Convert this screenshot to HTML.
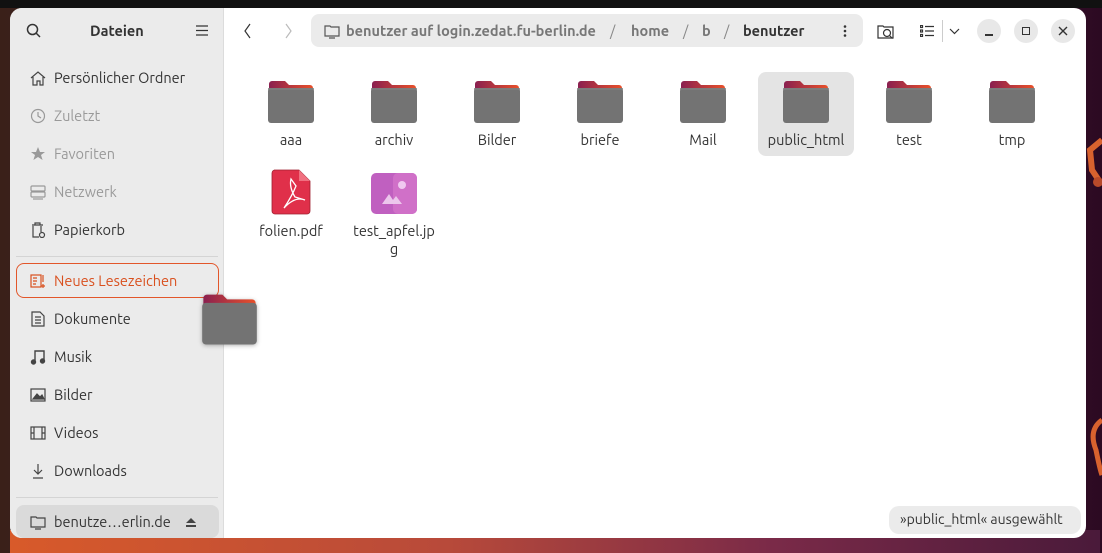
<!DOCTYPE html>
<html><head><meta charset="utf-8"><style>
*{margin:0;padding:0;box-sizing:border-box}
body{width:1102px;height:553px;overflow:hidden;position:relative;font-family:"Ubuntu","Liberation Sans",sans-serif;background:linear-gradient(90deg,#3a2019 0%,#4a1e2e 30%,#5a2040 70%,#2c0a22 100%)}
.top{position:absolute;left:0;top:0;width:1102px;height:8px;background:#111}
.bottomstrip{position:absolute;left:10px;top:530px;width:1090px;height:23px;background:linear-gradient(90deg,#d85a2a,#b84a3a 40%,#7a2a48 70%,#4a1a3a)}
.win{position:absolute;left:10px;top:8px;width:1076px;height:530px;background:#fff;border-radius:12px;overflow:hidden}
.side{position:absolute;left:0;top:0;width:214px;height:530px;background:#ebebeb;border-right:1px solid #dcdcdc}
.t{position:absolute;font-size:14.5px;color:#333;white-space:nowrap}
.it{position:absolute;left:0;width:214px;height:34px;font-size:14.5px;color:#333}
.it span{position:absolute;left:44px;top:8px}
.it svg{position:absolute;left:20px;top:9px}
.dim{color:#999}
.sep{position:absolute;left:6px;width:202px;height:1px;background:#d4d4d4}
.fold{position:absolute;width:48px;height:44px}
.lbl{position:absolute;width:100px;text-align:center;font-size:14.5px;color:#333}
.btn{position:absolute;width:24px;height:24px;border-radius:12px;background:#e8e8e8}
</style></head><body>
<div class="top"></div>
<svg style="position:absolute;left:1086px;top:130px" width="16" height="400"><path d="M16 10 L4 20 L6 40 L16 55" stroke="#d8622e" stroke-width="6" fill="none"/><circle cx="12" cy="52" r="5" fill="#b84a2a"/><path d="M16 290 Q2 300 10 320 Q14 340 16 345" stroke="#d8622e" stroke-width="5" fill="none"/></svg>
<div class="bottomstrip"></div>
<div class="win">
 <div class="side">
  <svg style="position:absolute;left:16px;top:15px" width="16" height="16" fill="none" stroke="#333" stroke-width="1.5"><circle cx="6.5" cy="6.5" r="5"/><path d="M10 10l4 4"/></svg>
  <div class="t" style="left:80px;top:14px;font-weight:bold;color:#333">Dateien</div>
  <svg style="position:absolute;left:186px;top:17px" width="12" height="11" stroke="#333" stroke-width="1.3"><path d="M0 1h12M0 5.5h12M0 10h12"/></svg>
  <div class="it" style="top:53px"><svg width="16" height="16" fill="none" stroke="#444" stroke-width="1.2"><path d="M1 8L8 2l7 6M3 7v8h4v-4h3v4h3V7"/></svg><span>Persönlicher Ordner</span></div>
  <div class="it dim" style="top:91px"><svg width="16" height="16" fill="none" stroke="#999" stroke-width="1.2"><circle cx="8" cy="8" r="6.5"/><path d="M8 4v4l3 2"/></svg><span>Zuletzt</span></div>
  <div class="it dim" style="top:129px"><svg width="16" height="16"><path d="M8 1l2 5h5l-4 3 1.6 5L8 11l-4.6 3L5 9 1 6h5z" fill="#999"/></svg><span>Favoriten</span></div>
  <div class="it dim" style="top:167px"><svg width="16" height="16" fill="none" stroke="#999" stroke-width="1.2"><rect x="1" y="2" width="14" height="5" rx="1"/><rect x="1" y="8" width="14" height="5" rx="1"/><path d="M3 15h10"/></svg><span>Netzwerk</span></div>
  <div class="it" style="top:205px"><svg width="16" height="16" fill="none" stroke="#444" stroke-width="1.2"><path d="M2 3h11M5 3V1h5v2M3 4v11h6M11 4v6"/><circle cx="12" cy="13" r="2.5"/></svg><span>Papierkorb</span></div>
  <div class="sep" style="top:248px"></div>
  <div style="position:absolute;left:6px;top:255px;width:203px;height:35px;border:1.3px solid #e2562a;border-radius:8px"></div>
  <div class="it" style="top:256px;color:#d9501e"><svg width="16" height="16" fill="none" stroke="#d9501e" stroke-width="1.2"><rect x="1" y="2" width="10" height="12"/><path d="M3 5h4M3 8h4M3 11h3M13 2v7M11 13h4M13 11v4"/></svg><span>Neues Lesezeichen</span></div>
  <div class="it" style="top:294px"><svg width="16" height="16" fill="none" stroke="#444" stroke-width="1.2"><path d="M2 1h8l4 4v10H2z M5 6h6M5 9h6M5 12h6"/></svg><span>Dokumente</span></div>
  <div class="it" style="top:332px"><svg width="16" height="16" fill="none" stroke="#444" stroke-width="1.4"><path d="M5 13V2h9v10"/><circle cx="3.5" cy="13" r="2" fill="#444"/><circle cx="12.5" cy="12" r="2" fill="#444"/></svg><span>Musik</span></div>
  <div class="it" style="top:370px"><svg width="16" height="16" fill="none" stroke="#444" stroke-width="1.2"><rect x="1" y="2" width="14" height="12"/><path d="M3 12l4-5 3 3 2-2 2 4z" fill="#444"/></svg><span>Bilder</span></div>
  <div class="it" style="top:408px"><svg width="16" height="16" fill="none" stroke="#444" stroke-width="1.2"><rect x="1" y="2" width="14" height="12"/><path d="M4 2v12M12 2v12M1 8h3M12 8h3"/></svg><span>Videos</span></div>
  <div class="it" style="top:446px"><svg width="16" height="16" fill="none" stroke="#444" stroke-width="1.2"><path d="M8 1v10M4 7l4 4 4-4M3 15h10"/></svg><span>Downloads</span></div>
  <div class="sep" style="top:489px"></div>
  <div style="position:absolute;left:6px;top:497px;width:203px;height:33px;background:#dadada;border-radius:8px"></div>
  <div class="it" style="top:497px"><svg width="16" height="16" fill="none" stroke="#444" stroke-width="1.2"><path d="M1 3h5l1 1h8v9H1zM5 15h6"/></svg><span>benutze…erlin.de</span><svg style="left:176px;top:12px" width="10" height="10"><path d="M0 6L5 1l5 5z M0 8h10v2H0z" fill="#444"/></svg></div>
 </div>
 <!-- header -->
 <svg style="position:absolute;left:233px;top:15px" width="10" height="16" fill="none" stroke="#333" stroke-width="1.2"><path d="M7 1L2 8l5 7"/></svg>
 <svg style="position:absolute;left:273px;top:15px" width="10" height="16" fill="none" stroke="#bbb" stroke-width="1.2"><path d="M3 1l5 7-5 7"/></svg>
 <div style="position:absolute;left:301px;top:6px;width:552px;height:33px;background:#ebebeb;border-radius:8px"></div>
 <svg style="position:absolute;left:314px;top:15px" width="16" height="16" fill="none" stroke="#555" stroke-width="1.2"><path d="M1 3h5l1 1h8v9H1zM5 15h6"/></svg>
 <div class="t" style="left:336px;top:14px;font-weight:bold;color:#777">benutzer auf login.zedat.fu-berlin.de</div>
 <div class="t" style="left:600px;top:14px;color:#888">/</div>
 <div class="t" style="left:621px;top:14px;font-weight:bold;color:#777">home</div>
 <div class="t" style="left:673px;top:14px;color:#888">/</div>
 <div class="t" style="left:692px;top:14px;font-weight:bold;color:#777">b</div>
 <div class="t" style="left:714px;top:14px;color:#888">/</div>
 <div class="t" style="left:733px;top:14px;font-weight:bold;color:#333">benutzer</div>
 <svg style="position:absolute;left:833px;top:17px" width="4" height="12" fill="#333"><circle cx="2" cy="1.5" r="1.3"/><circle cx="2" cy="6" r="1.3"/><circle cx="2" cy="10.5" r="1.3"/></svg>
 <svg style="position:absolute;left:867px;top:14px" width="18" height="18" fill="none" stroke="#333" stroke-width="1.2"><path d="M1 4h5l1 1h9v11H1z"/><circle cx="10" cy="11" r="3.5"/><path d="M12.5 13.5l3 3"/></svg>
 <svg style="position:absolute;left:910px;top:17px" width="14" height="12" fill="none" stroke="#333" stroke-width="1.2"><rect x="0.5" y="0.5" width="2" height="2"/><rect x="0.5" y="5" width="2" height="2"/><rect x="0.5" y="9.5" width="2" height="2"/><path d="M5 1.5h9M5 6h9M5 10.5h9"/></svg>
 <div style="position:absolute;left:932px;top:12px;width:1px;height:22px;background:#ccc"></div>
 <svg style="position:absolute;left:939px;top:20px" width="11" height="7" fill="none" stroke="#333" stroke-width="1.2"><path d="M1 1l4.5 4.5L10 1"/></svg>
 <div class="btn" style="left:967px;top:11px"><div style="position:absolute;left:8px;top:15px;width:8px;height:1.5px;background:#333"></div></div>
 <div class="btn" style="left:1004px;top:11px"><div style="position:absolute;left:8px;top:8px;width:8px;height:8px;border:1.4px solid #333"></div></div>
 <div class="btn" style="left:1041px;top:11px"><svg style="position:absolute;left:7px;top:7px" width="10" height="10" stroke="#333" stroke-width="1.4"><path d="M1 1l8 8M9 1l-8 8"/></svg></div>
 <!-- selection -->
 <div style="position:absolute;left:748px;top:64px;width:96px;height:84px;background:#e4e4e4;border-radius:8px"></div>
</div>
<svg width="0" height="0" style="position:absolute"><defs>
<linearGradient id="tab" x1="0" x2="1"><stop offset="0" stop-color="#8a2050"/><stop offset="1" stop-color="#e8502a"/></linearGradient>
</defs></svg>
<div id="folders"></div>
<script>
var names=["aaa","archiv","Bilder","briefe","Mail","public_html","test","tmp"];
var h="";
for(var i=0;i<8;i++){var cx=291+103*i;
h+='<svg class="fold" style="left:'+(cx-24)+'px;top:80px" viewBox="0 0 48 44"><path d="M2 4a3 3 0 0 1 3-3h13l4 4h21a3 3 0 0 1 3 3v6H2z" fill="url(#tab)"/><rect x="1" y="8" width="46" height="35" rx="3" fill="#737373"/><rect x="1" y="8" width="46" height="2" rx="1" fill="#7c7c7c"/></svg>';
h+='<div class="lbl" style="left:'+(cx-50)+'px;top:131px">'+names[i]+'</div>';}
document.getElementById("folders").innerHTML=h;
</script>
<svg style="position:absolute;left:271px;top:169px" width="40" height="46" viewBox="0 0 40 46"><path d="M3 1h25l11 11v30a3 3 0 0 1-3 3H4a3 3 0 0 1-3-3V4a3 3 0 0 1 3-3z" fill="#e0304a" stroke="#a02030" stroke-width="0.8"/><path d="M28 1v11h11z" fill="#f07080"/><path d="M20 10q-2 8 4 18l10 3q-10-4-21 8q8-12 12-22z" fill="none" stroke="#fff" stroke-width="1.3"/></svg>
<svg style="position:absolute;left:371px;top:173px" width="46" height="42" viewBox="0 0 46 42"><rect x="0" y="0" width="46" height="41" rx="5" fill="#c060c0"/><rect x="22" y="0" width="24" height="41" rx="5" fill="#d070c8"/><circle cx="31" cy="12" r="4" fill="#f0c8f0"/><path d="M11 31l7-10 4 6 3-4 6 8z" fill="#ecc6ec"/></svg>
<div class="lbl" style="left:241px;top:222px">folien.pdf</div>
<div class="lbl" style="left:344px;top:222px;line-height:18px">test_apfel.jp<br>g</div>
<svg style="position:absolute;left:201px;top:293px;filter:drop-shadow(0 1px 2px rgba(0,0,0,.3))" width="57" height="53" viewBox="0 0 48 44"><path d="M2 4a3 3 0 0 1 3-3h13l4 4h21a3 3 0 0 1 3 3v6H2z" fill="url(#tab)"/><rect x="1" y="8" width="46" height="35" rx="3" fill="#737373"/></svg>
<div style="position:absolute;left:889px;top:506px;width:192px;height:28px;background:#ebebeb;border-radius:10px;font-size:14px;color:#333;padding:5px 0 0 11px">»public_html« ausgewählt</div>
</body></html>
